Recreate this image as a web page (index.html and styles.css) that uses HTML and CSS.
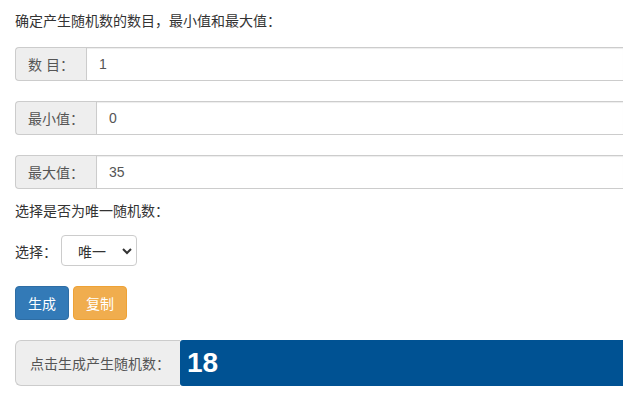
FILE: index.html
```html
<!DOCTYPE html>
<html lang="zh-CN">
<head>
  <meta charset="UTF-8" />
  <title>随机数生成</title>
  <link rel="stylesheet" href="styles.css">
</head>
<body>
  <div class="wrap">
    <p class="tip">确定产生随机数的数目，最小值和最大值：</p>
    <div class="input-group">
      <span class="addon">数 目：</span>
      <input type="text" class="field" value="1">
    </div>
    <div class="input-group">
      <span class="addon">最小值：</span>
      <input type="text" class="field" value="0">
    </div>
    <div class="input-group last">
      <span class="addon">最大值：</span>
      <input type="text" class="field" value="35">
    </div>
    <p class="tip">选择是否为唯一随机数：</p>
    <div class="choose">
      <label>选择：</label>
      <div class="select-box">
        <span>唯一</span>
        <svg width="12" height="8" viewBox="0 0 12 8"><path d="M2 2l4 4 4-4" fill="none" stroke="#333" stroke-width="2"/></svg>
      </div>
    </div>
    <div class="buttons">
      <button class="btn btn-primary">生成</button>
      <button class="btn btn-warning">复制</button>
    </div>
    <div class="input-group result">
      <span class="addon">点击生成产生随机数：</span>
      <div class="output">18</div>
    </div>
  </div>
</body>
</html>
```

FILE: styles.css
```css
body {
  margin: 0;
  font-family: "Liberation Sans", "Noto Sans CJK SC", sans-serif;
  font-size: 14px;
  color: #333;
  background: #fff;
}
.wrap {
  padding: 11px 0 0 15px;
}
.tip {
  margin: 0 0 16px;
  line-height: 20px;
}
.input-group {
  display: flex;
  height: 34px;
  margin-bottom: 20px;
}
.input-group.last {
  margin-bottom: 12px;
}
.addon {
  display: flex;
  align-items: center;
  padding: 0 12px;
  background: #eee;
  border: 1px solid #ccc;
  border-right: none;
  border-radius: 4px 0 0 4px;
  color: #555;
  font-size: 14px;
  white-space: nowrap;
}
.field {
  flex: 1;
  min-width: 0;
  border: 1px solid #ccc;
  border-right: none;
  padding: 0 12px;
  font-family: inherit;
  font-size: 14px;
  color: #555;
  box-shadow: inset 0 1px 1px rgba(0,0,0,0.075);
  outline: none;
}
.choose {
  display: flex;
  align-items: center;
  margin: -2px 0 20px;
}
.choose label {
  margin-right: 4px;
}
.select-box {
  display: flex;
  align-items: center;
  justify-content: space-between;
  width: 76px;
  height: 31px;
  padding: 0 2px 0 16px;
  box-sizing: border-box;
  border: 1px solid #ccc;
  border-radius: 4px;
  font-size: 14px;
  color: #333;
}
.select-box svg {
  margin-right: 1px;
}
.buttons {
  display: flex;
  gap: 4px;
  margin-bottom: 20px;
}
.btn {
  width: 54px;
  height: 34px;
  padding: 0;
  border: 1px solid transparent;
  border-radius: 4px;
  color: #fff;
  font-family: inherit;
  font-size: 14px;
}
.btn-primary {
  background: #337ab7;
  border-color: #2e6da4;
}
.btn-warning {
  background: #f0ad4e;
  border-color: #eea236;
}
.result {
  height: 46px;
  margin-bottom: 0;
}
.result .addon {
  width: 165px;
  box-sizing: border-box;
  padding: 0 0 0 14px;
  border-radius: 6px 0 0 6px;
}
.output {
  flex: 1;
  display: flex;
  align-items: center;
  padding-left: 7px;
  background: #005293;
  color: #fff;
  font-size: 28px;
  font-weight: bold;
  border-radius: 3px 0 0 3px;
}
```
